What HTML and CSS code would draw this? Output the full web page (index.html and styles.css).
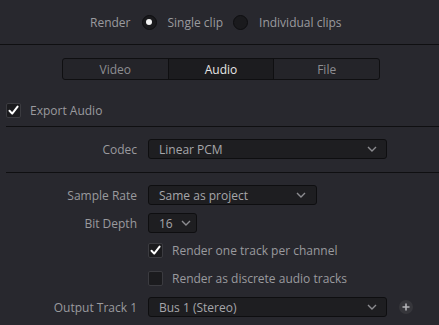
FILE: index.html
```html
<!DOCTYPE html>
<html>
<head>
<meta charset="utf-8">
<link rel="stylesheet" href="styles.css">
</head>
<body>
<div class="panel">
  <div class="render-row">
    <span class="label">Render</span>
    <span class="radio on"></span>
    <span class="opt">Single clip</span>
    <span class="radio"></span>
    <span class="opt">Individual clips</span>
  </div>
  <div class="tabs-wrap">
    <div class="tabs">
      <div class="tab">Video</div>
      <div class="tab active">Audio</div>
      <div class="tab">File</div>
    </div>
  </div>
  <div class="export-row">
    <span class="check on"><svg viewBox="0 0 15 15" width="15" height="15"><path d="M3.5 7.8 L6.2 10.6 L11.6 3.6" fill="none" stroke="#fff" stroke-width="2" stroke-linecap="round" stroke-linejoin="round"/></svg></span>
    <span class="opt">Export Audio</span>
  </div>
  <div class="divider"></div>
  <div class="row codec-row">
    <span class="flabel">Codec</span>
    <div class="select wide"><span>Linear PCM</span><svg class="chev" viewBox="0 0 10 6" width="10" height="6"><path d="M1 1 L5 5 L9 1" fill="none" stroke="#8c8c90" stroke-width="1.4"/></svg></div>
  </div>
  <div class="divider"></div>
  <div class="row r-sample">
    <span class="flabel">Sample Rate</span>
    <div class="select mid"><span>Same as project</span><svg class="chev" viewBox="0 0 10 6" width="10" height="6"><path d="M1 1 L5 5 L9 1" fill="none" stroke="#8c8c90" stroke-width="1.4"/></svg></div>
  </div>
  <div class="row r-bit">
    <span class="flabel">Bit Depth</span>
    <div class="select small"><span>16</span><svg class="chev" viewBox="0 0 10 6" width="10" height="6"><path d="M1 1 L5 5 L9 1" fill="none" stroke="#8c8c90" stroke-width="1.4"/></svg></div>
  </div>
  <div class="row r-check1">
    <span class="flabel"></span>
    <div class="checkline">
      <span class="check on"><svg viewBox="0 0 15 15" width="15" height="15"><path d="M3.5 7.8 L6.2 10.6 L11.6 3.6" fill="none" stroke="#fff" stroke-width="2" stroke-linecap="round" stroke-linejoin="round"/></svg></span>
      <span class="opt">Render one track per channel</span>
    </div>
  </div>
  <div class="row r-check2">
    <span class="flabel"></span>
    <div class="checkline">
      <span class="check"></span>
      <span class="opt">Render as discrete audio tracks</span>
    </div>
  </div>
  <div class="row r-out">
    <span class="flabel">Output Track 1</span>
    <div class="select wide"><span>Bus 1 (Stereo)</span><svg class="chev" viewBox="0 0 10 6" width="10" height="6"><path d="M1 1 L5 5 L9 1" fill="none" stroke="#8c8c90" stroke-width="1.4"/></svg></div>
    <span class="plus"><svg viewBox="0 0 14 14" width="14" height="14"><path d="M7 3.5 V10.5 M3.5 7 H10.5" stroke="#b4b4b8" stroke-width="1.6"/></svg></span>
  </div>
</div>
</body>
</html>
```
FILE: styles.css
```css
html, body {
  margin: 0;
  padding: 0;
  background: #28282e;
}
body {
  width: 439px;
  height: 325px;
  overflow: hidden;
  font-family: "Open Sans", "Noto Sans", sans-serif;
  font-size: 12px;
  color: #9a9a9e;
}
.panel {
  display: flex;
  flex-direction: column;
}
.render-row {
  height: 44px;
  border-bottom: 1px solid #0f0f11;
  display: flex;
  align-items: center;
  padding-left: 90px;
}
.render-row .label { margin-right: 11px; }
.radio {
  width: 13px;
  height: 13px;
  border-radius: 50%;
  background: #1a1a1d;
  border: 1px solid #0e0e10;
  margin-right: 11px;
  display: flex;
  align-items: center;
  justify-content: center;
}
.radio.on::after {
  content: "";
  width: 6px;
  height: 6px;
  border-radius: 50%;
  background: #f2f2f2;
}
.render-row .opt { margin-right: 10px; }
.tabs-wrap {
  padding: 13px 0 0 62px;
  height: 44px;
  box-sizing: border-box;
}
.tabs {
  width: 318px;
  height: 22px;
  box-sizing: border-box;
  border: 1px solid #0f0f11;
  border-radius: 3px;
  display: flex;
  background: #242429;
  overflow: hidden;
}
.tab {
  flex: 1;
  display: flex;
  align-items: center;
  justify-content: center;
  color: #8e8e92;
  font-size: 12px;
}
.tab + .tab { border-left: 1px solid #0f0f11; }
.tab.active {
  background: #1c1c1f;
  color: #e6e6e6;
}
.export-row {
  display: flex;
  align-items: center;
  height: 15px;
  padding-left: 6px;
  margin-top: 14px;
}
.check {
  width: 15px;
  height: 15px;
  box-sizing: border-box;
  border: 1px solid #3b3b40;
  border-radius: 2px;
  background: #1b1b1e;
  display: flex;
  align-items: center;
  justify-content: center;
  flex: none;
}
.check svg { display: block; margin: -1px; }
.export-row .opt { margin-left: 9px; }
.divider {
  height: 1px;
  background: #0f0f11;
  margin-left: 6px;
}
.export-row + .divider { margin-top: 8px; }
.row {
  display: flex;
  align-items: center;
}
.flabel {
  width: 137px;
  text-align: right;
  margin-right: 11px;
  flex: none;
}
.select {
  height: 20px;
  box-sizing: border-box;
  border: 1px solid #0e0e10;
  border-radius: 3px;
  background: #1e1e21;
  display: flex;
  align-items: center;
  justify-content: space-between;
  padding: 0 9px 0 10px;
  color: #a6a6aa;
  flex: none;
}
.select.wide { width: 239px; }
.select.mid { width: 169px; padding-right: 10px; }
.select.small { width: 49px; justify-content: flex-start; }
.select.small .chev { margin-left: 8px; }
.chev { display: block; flex: none; }
.codec-row { margin-top: 12px; height: 20px; }
.codec-row + .divider { margin-top: 13px; }
.r-sample { margin-top: 12px; height: 20px; }
.r-bit { margin-top: 8px; height: 20px; }
.r-check1 { margin-top: 10px; height: 15px; }
.r-check2 { margin-top: 13px; height: 15px; }
.r-out { margin-top: 11px; height: 20px; }
.checkline { display: flex; align-items: center; }
.checkline .opt { margin-left: 9px; }
.plus {
  width: 14px;
  height: 14px;
  border-radius: 50%;
  background: #36363b;
  margin-left: 12px;
  display: flex;
  flex: none;
}
.plus svg { display: block; }
```
